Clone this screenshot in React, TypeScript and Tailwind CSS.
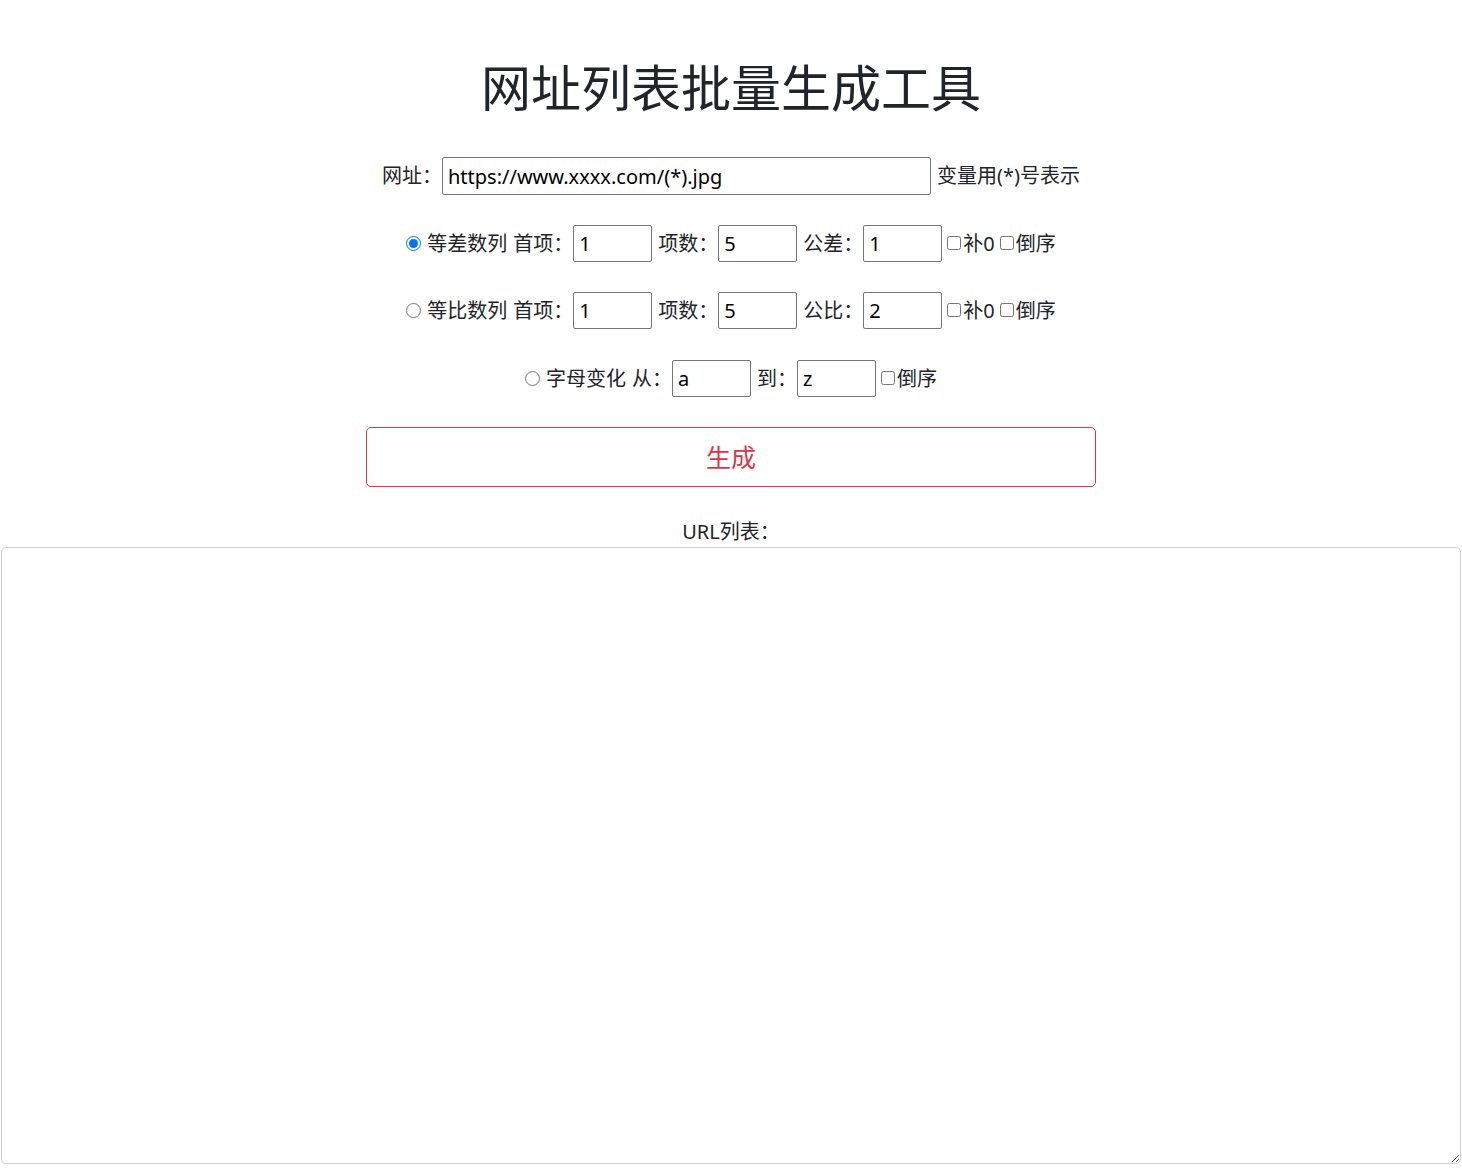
import React from "react";

const font = { fontFamily: '"Noto Sans","Noto Sans CJK SC",sans-serif' };

function NumInput({ value }: { value: string }) {
  return (
    <input
      type="text"
      defaultValue={value}
      style={font}
      className="w-[79px] h-[37px] border border-[#767676] rounded-[2px] px-[5px] text-[20px] text-black bg-white outline-none"
    />
  );
}

function Check({ label }: { label: string }) {
  return (
    <label className="flex items-center">
      <input type="checkbox" className="w-[14px] h-[14px] m-0 ml-[5px] mr-[2px] mb-[2px]" />
      <span>{label}</span>
    </label>
  );
}

export default function App() {
  return (
    <div className="bg-white min-h-[1171px] text-[#212529] text-[20px] leading-[30px]" style={font}>
      <h1 className="text-center text-[50px] leading-[66px] pt-[55px] font-normal">网址列表批量生成工具</h1>

      <div className="flex justify-center items-center mt-[36px]">
        <span>网址：</span>
        <input
          type="text"
          defaultValue="https://www.xxxx.com/(*).jpg"
          style={font}
          className="w-[489px] h-[38px] border border-[#767676] rounded-[2px] px-[5px] text-[20px] text-black bg-white outline-none"
        />
        <span className="ml-[6px]">变量用(*)号表示</span>
      </div>

      <div className="flex justify-center items-center mt-[30px]">
        <input type="radio" name="mode" defaultChecked className="w-[15px] h-[15px] m-0 mr-[6px]" />
        <span>等差数列</span>
        <span className="ml-[6px]">首项：</span>
        <NumInput value="1" />
        <span className="ml-[6px]">项数：</span>
        <NumInput value="5" />
        <span className="ml-[6px]">公差：</span>
        <NumInput value="1" />
        <Check label="补0" />
        <Check label="倒序" />
      </div>

      <div className="flex justify-center items-center mt-[30px]">
        <input type="radio" name="mode" className="w-[15px] h-[15px] m-0 mr-[6px]" />
        <span>等比数列</span>
        <span className="ml-[6px]">首项：</span>
        <NumInput value="1" />
        <span className="ml-[6px]">项数：</span>
        <NumInput value="5" />
        <span className="ml-[6px]">公比：</span>
        <NumInput value="2" />
        <Check label="补0" />
        <Check label="倒序" />
      </div>

      <div className="flex justify-center items-center mt-[31px]">
        <input type="radio" name="mode" className="w-[15px] h-[15px] m-0 mr-[6px]" />
        <span>字母变化</span>
        <span className="ml-[6px]">从：</span>
        <NumInput value="a" />
        <span className="ml-[6px]">到：</span>
        <NumInput value="z" />
        <Check label="倒序" />
      </div>

      <div className="flex justify-center mt-[30px]">
        <button className="w-[730px] h-[60px] border border-[#dc3545] rounded-[5px] text-[#dc3545] text-[25px] bg-white" style={font}>
          生成
        </button>
      </div>

      <div className="text-center mt-[30px] leading-[30px]">URL列表：</div>

      <textarea className="block mx-[1px] w-[1460px] h-[617px] border border-[#d0d0d0] rounded-[5px] bg-white outline-none"></textarea>
    </div>
  );
}
